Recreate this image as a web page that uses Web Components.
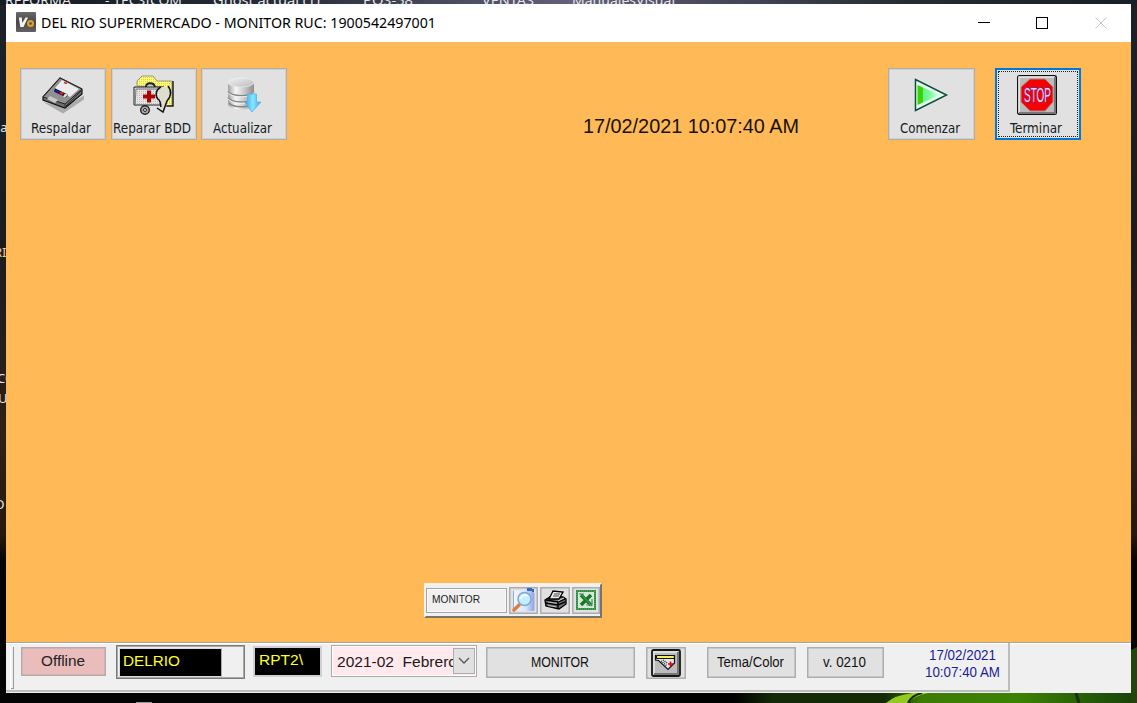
<!DOCTYPE html>
<html lang="es">
<head>
<meta charset="utf-8">
<title>DEL RIO SUPERMERCADO - MONITOR</title>
<style>
html,body{margin:0;width:1137px;height:703px;overflow:hidden;background:#111}
</style>
</head>
<body>
<desk-top>
<app-window></app-window>
</desk-top>
<script>
const define=(name,html,after)=>customElements.define(name,class extends HTMLElement{
  connectedCallback(){
    if(this.shadowRoot)return;
    const r=this.attachShadow({mode:'open'});
    const t=document.createElement('template');
    t.innerHTML=html;
    r.append(t.content.cloneNode(true));
    if(after)after(this,r);
  }
});

/* A single line of text condensed or widened to the width given in "w". */
define('fit-text',`<style>:host{display:inline-block;white-space:pre;line-height:1}span{display:inline-block;transform-origin:0 50%}</style><span><slot></slot></span>`,(el,r)=>{
  const w=+el.getAttribute('w'),s=r.querySelector('span');
  const cur=s.getBoundingClientRect().width;
  if(w&&cur){s.style.transform='scaleX('+(w/cur)+')';el.style.width=w+'px'}
});

const icons={
logo:`<svg width="20" height="20" viewBox="0 0 20 20"><defs><linearGradient id="a" x2="0" y2="1"><stop stop-color="#6a6a6a"/><stop offset=".5" stop-color="#484848"/><stop offset="1" stop-color="#626262"/></linearGradient></defs><rect width="20" height="20" rx="1" fill="url(#a)"/><path d="M2.800 5.500h3l.5 5.500L9.500 5.500h2.500L7.500 15H4.300z" fill="#f2f2f2"/><circle cx="14.500" cy="11.500" r="2.400" fill="none" stroke="#e0a02a" stroke-width="2.200"/></svg>`,
floppy:`<svg width="44" height="38" viewBox="0 0 44 38"><path d="M2 26L22 37.500l21-14v-4L24 31z" fill="#acacac"/><path d="M2 21L19 2l22 11v5L24 32 2 24z" fill="#6f6f6f" stroke="#111" stroke-width="1.200"/><path d="M2 21L19 2l22 11L24 28z" fill="#919191" stroke="#222"/><path d="M21 4l17 9-9 8-15-9z" fill="#ececec"/><path d="M14 12.500l13 6-2 3-12-6z" fill="#111"/><path d="M15 13.500l4 2-2 2-4-2z" fill="#1818b0"/><path d="M20 15.500l3 1.500-2 2-3-2z" fill="#d22"/><path d="M24 17.500l3 1-3 3-2-1z" fill="#ddd"/><path d="M9 20l8 4-3 3-8-4z" fill="#c9c9c9"/><path d="M23 6.500l3 1" stroke="#e22" stroke-width="1.500"/><path d="M24 28v4M41 14L25 30" stroke="#333"/></svg>`,
repair:`<svg width="42" height="40" viewBox="0 0 42 40"><defs><pattern id="p" width="2" height="2" patternUnits="userSpaceOnUse"><rect width="2" height="2" fill="#fcf978"/><rect width="1" height="1" fill="#dcd63c"/></pattern><pattern id="q" width="2" height="2" patternUnits="userSpaceOnUse"><rect width="2" height="2" fill="#e6e6e6"/><rect width="1" height="1" fill="#bbb"/></pattern></defs><path d="M4 11V6l5-5h11l4 5h15v25H30V12z" fill="url(#p)" stroke="#9a9a80"/><path d="M40 6v25H30" fill="none" stroke="#222" stroke-width="1.500"/><path d="M13 12c0-5 8-5 9 0" fill="#ccc" stroke="#222" stroke-width="1.800"/><path d="M1 12h30v18H1z" fill="url(#q)" stroke="#222"/><path d="M2 31l1-17h27" fill="none" stroke="#777"/><path d="M16 15.500v12M10 21.500h12" stroke="#b00000" stroke-width="4"/><path d="M28 12c-4 5-3 10 1 13l-1 8 5 2 1-10c4-4 4-9 0-13z" fill="#dedece"/><path d="M28 12c-6 3-6 10-2 13 2 2 1 4 2 7M35 11c4 5 3 11-1 15l-4 11-6-4" fill="none" stroke="#111" stroke-width="1.500"/><circle cx="12" cy="35" r="4.300" fill="#aaa" stroke="#222" stroke-width="1.400"/><circle cx="12" cy="35" r="1.500" fill="#eee" stroke="#222"/></svg>`,
database:`<svg width="36" height="36" viewBox="0 0 36 36"><defs><linearGradient id="a"><stop stop-color="#a2a2a2"/><stop offset=".3" stop-color="#f6f6f6"/><stop offset=".65" stop-color="#c5c5c5"/><stop offset="1" stop-color="#8e8e8e"/></linearGradient><linearGradient id="c" x2="1" y2="1"><stop stop-color="#f2f2f2"/><stop offset="1" stop-color="#bbb"/></linearGradient><linearGradient id="b"><stop stop-color="#3a9ae4"/><stop offset=".5" stop-color="#86e8ff"/><stop offset="1" stop-color="#38a5ee"/></linearGradient></defs><g fill="url(#a)"><path d="M2 21c4 6 23 6 26 0v7c-4 6-22 6-26 0z"/><path d="M2 15c4 5 23 5 26 0v5c-4 6-22 6-26 0z"/><path d="M2 5v9c4 6 23 6 26 0V5z"/></g><g fill="none"><path d="M2 14.500c4 5.500 23 5.500 26 0M2 20.500c4 6 23 6 26 0M3 26c4 5 21 5 25 0" stroke="#858585" stroke-width="1.400"/><path d="M2 15.800c4 5.500 23 5.500 26 0M2 21.800c4 6 23 6 26 0" stroke="#f2f2f2"/></g><ellipse cx="15" cy="5.500" rx="13" ry="4.500" fill="url(#c)" stroke="#eee" stroke-width=".7"/><path d="M21.500 17h9v8h4.500l-9 10-7.500-10h3z" fill="url(#b)" stroke="#5cb4ee" stroke-width=".8"/></svg>`,
play:`<svg width="36" height="34" viewBox="0 0 36 34"><defs><linearGradient id="a"><stop offset=".22" stop-color="#37d300"/><stop offset=".27" stop-color="#64f282"/><stop offset=".65" stop-color="#82ffa4"/><stop offset="1" stop-color="#fff"/></linearGradient></defs><path d="M1.500 1.500v31l31-15.500z" fill="#e9fff0" stroke="#07513a" stroke-width="1.500"/><path d="M3.500 7v20l22-10z" fill="url(#a)"/></svg>`,
stop:`<svg width="42" height="40" viewBox="0 0 42 40"><rect x=".7" y=".7" width="38.600" height="38.600" rx="1.500" fill="#bbb" stroke="#111" stroke-width="1.400"/><path d="M2 38V2h36" fill="none" stroke="#eee" stroke-width="1.500"/><path d="M38 2v36H2" fill="none" stroke="#777" stroke-width="2"/><path d="M13 4h15l8 8v15l-8 9H13l-9-9V12z" fill="#f80000" stroke="#a88"/><g font-family="Liberation Sans" font-size="21"><text x="7" y="27" textLength="27" lengthAdjust="spacingAndGlyphs" fill="#dcd4e4" stroke="#8d1f8a" stroke-width="1.800" paint-order="stroke">STOP</text></g></svg>`,
search:`<svg width="25" height="24" viewBox="0 0 25 24"><defs><linearGradient id="a"><stop stop-color="#f4f7ff"/><stop offset=".6" stop-color="#dae6fb"/><stop offset="1" stop-color="#8ca6ec"/></linearGradient></defs><path d="M2 3l14-2h7v22H3z" fill="url(#a)"/><path d="M2.500 3v19M23 5v17" stroke="#8fabdf"/><path d="M16 0h5v3h-5zM21 1h2v3h-2z" fill="#3866c4"/><path d="M8 17l-5 5" stroke="#d8813c" stroke-width="3.500" stroke-linecap="round"/><circle cx="13.500" cy="11" r="6.500" fill="#c2efff" stroke="#88a6cc" stroke-width="1.500"/><path d="M9.500 11c1-4 5-5 7-3" fill="none" stroke="#fff" stroke-width="1.500"/></svg>`,
printer:`<svg width="23" height="20" viewBox="0 0 23 20"><path d="M1 10l5-3h13l3 2v5l-7 5L2 16z" fill="#777" stroke="#000" stroke-width="1.400"/><path d="M5 9L9 1l10 1-4 7z" fill="#eee" stroke="#000" stroke-width="1.300"/><path d="M10 4h6M9 6h6" stroke="#444"/><path d="M2 10l12 2 7-3M2 13l12 2 7-3M14 12v6" fill="none" stroke="#000" stroke-width="1.400"/><path d="M4 12l9 1.300M4 15.500l8 1.300" stroke="#bbb"/><path d="M14 11l6-3" stroke="#ddd"/></svg>`,
excel:`<svg width="20" height="20" viewBox="0 0 20 20"><rect x="1" y="1" width="18" height="18" fill="#d6e8d6" stroke="#2c8a42" stroke-width="2"/><rect x="1" y="1" width="18" height="18" fill="none" stroke="#6fae7b" stroke-width="1" stroke-dasharray="1 1"/><path d="M5 5l10 10M15 5L5 15" stroke="#187529" stroke-width="3.500"/><path d="M3 4h5M5 4l11 12M16 9v6h-6" fill="none" stroke="#3f9150" stroke-width="1.200"/></svg>`,
drop:`<svg width="30" height="28" viewBox="0 0 30 28"><rect x="1" y="1" width="28" height="26" rx="1.500" fill="#bcbcbc" stroke="#161616" stroke-width="1.800"/><path d="M3 25V3h24" fill="none" stroke="#e6e6e6" stroke-width="1.500"/><path d="M27 3v22H3" fill="none" stroke="#777" stroke-width="2"/><path d="M5 10l12 11 7-8v-3z" fill="#e5e5e5"/><path d="M5.500 6.500h18v3h-18z" fill="#e8e23a" stroke="#111"/><path d="M7 8h15" stroke="#ffff90"/><path d="M4.500 6v5l3 .5 9.500 9 6.500-6.500V6" fill="none" stroke="#111" stroke-width="1.200"/><path d="M10 12l6 5M12 11l4 3" stroke="#333" stroke-width="1.500" stroke-dasharray="1 1"/><path d="M19.500 12.500v5M17 15h5" stroke="#e00000" stroke-width="1.500"/></svg>`};

define('ui-icon',`<style>:host{display:block;line-height:0}svg{display:block}</style>`,(el,r)=>{
  r.innerHTML+=icons[el.getAttribute('name')];
});

/* Large toolbar command: picture above, caption below. */
define('tool-button',`<style>
:host{display:flex;flex-direction:column;justify-content:space-between;align-items:center;box-sizing:border-box;width:86px;height:72px;border:1px solid #adadad;box-shadow:inset 0 0 0 1px #d2d0cc;background:#e1e1e1;flex:none;font:14px "DejaVu Sans Condensed","DejaVu Sans",sans-serif;font-stretch:condensed;color:#161b24}
.pic{display:flex;height:51px;padding-top:1px;align-items:center;justify-content:center}
.cap{height:19px;padding-right:4px}
:host([focused]){border:2px solid #0078d7;box-shadow:none;outline:1px dotted #222;outline-offset:-4px}
:host([focused]) .pic{height:49px;padding-top:0}:host([focused]) .cap{height:18px}
</style><div class="pic"><slot name="icon"></slot></div><div class="cap"><slot></slot></div>`);

define('push-button',`<style>:host{display:flex;box-sizing:border-box;align-items:center;justify-content:center;flex:none;border:1px solid #adadad;box-shadow:inset 0 0 0 .5px #adadad;background:#e1e1e1;color:#111;font:14px "Liberation Sans",sans-serif}</style><slot></slot>`);

define('title-bar',`<style>
:host{display:flex;align-items:center;height:38px;box-sizing:border-box;background:#fff;padding:0 24px 2px 10px;color:#000;font:15px "Noto Sans",sans-serif}
fit-text{margin-left:5px;flex:1;}
ui-icon{margin-top:0}
.ctl{display:flex;align-items:center;gap:46px;padding-top:2px;margin-right:1px}
svg{display:block}
</style><ui-icon name="logo"></ui-icon><fit-text w="395">DEL RIO SUPERMERCADO - MONITOR RUC: 1900542497001</fit-text>
<div class="ctl"><svg width="12" height="12"><path d="M0 5.500h12" stroke="#000"/></svg><svg width="12" height="12"><rect x=".5" y=".5" width="11" height="11" fill="none" stroke="#000"/></svg><svg width="12" height="12" style="margin-right:-1px;margin-left:1px"><path d="M.5 .5l11 11M11.500 .5l-11 11" stroke="#c4c4c4"/></svg></div>`);

define('report-bar',`<style>
:host{display:flex;align-items:center;box-sizing:border-box;width:178px;height:35px;background:#f0f0f0;border:2px solid;border-color:#f7f3ec #77746e #77746e #f7f3ec;gap:2px;font-size:0}
.name{display:flex;align-items:center;box-sizing:border-box;width:81px;height:25px;border:1px solid #a2a4aa;box-shadow:inset 0 0 0 1px #fafafa;padding:0 0 2px 5px;font:10.500px "Liberation Sans",sans-serif;color:#222}
push-button{width:29px;height:27px;padding-bottom:2px}
push-button.b{width:30px}
</style><div class="name"><fit-text w="48">MONITOR</fit-text></div><push-button><ui-icon name="search"></ui-icon></push-button><push-button class="b"><ui-icon name="printer"></ui-icon></push-button><push-button style="flex:1 1 0;min-width:0"><ui-icon name="excel"></ui-icon></push-button>`);

define('work-area',`<style>
:host{display:flex;flex-direction:column;justify-content:space-between;height:600px;box-sizing:border-box;padding:26px 50px 24px 14px;background:#ffb957}
.row{display:flex}
.clock{margin:46px 89px 0 296px;color:#161208;font:21px "Liberation Sans",sans-serif}
report-bar{margin-left:404px}
</style><div class="row">
<tool-button><ui-icon slot="icon" name="floppy"></ui-icon><fit-text w="60">Respaldar</fit-text></tool-button>
<tool-button style="margin-left:5px"><ui-icon slot="icon" name="repair"></ui-icon><fit-text w="78">Reparar BDD</fit-text></tool-button>
<tool-button style="margin-left:4px"><ui-icon slot="icon" name="database"></ui-icon><fit-text w="59">Actualizar</fit-text></tool-button>
<div class="clock"><fit-text w="216">17/02/2021 10:07:40 AM</fit-text></div>
<tool-button style="width:87px"><ui-icon slot="icon" name="play"></ui-icon><fit-text w="60">Comenzar</fit-text></tool-button>
<tool-button focused style="margin-left:20px"><ui-icon slot="icon" name="stop"></ui-icon><fit-text w="52">Terminar</fit-text></tool-button>
</div><report-bar></report-bar>`);

define('status-bar',`<style>
:host{display:flex;height:51px;box-sizing:border-box;border-top:1px solid #a5a39e;background:#f0f0f0;font:14px "Liberation Sans",sans-serif;box-shadow:inset 0 1px #fff}
.panel{display:flex;align-items:flex-start;box-sizing:border-box;width:1004px;height:49px;border-right:2px solid #bdbdbd;border-bottom:2px solid #bdbdbd;padding-left:5px;flex:none}
.grip{box-sizing:border-box;width:3px;height:42px;margin-top:4px;border-right:1px solid #9a9a9a;border-bottom:1px solid #9a9a9a;box-shadow:-1px 0 #fff}
push-button{padding-bottom:2px}
.off{background:#eabcbc;width:85px;height:29px;margin:4px 0 0 7px;color:#222;border-color:#b8a8a8}
.db{box-sizing:border-box;width:129px;height:34px;border:1px solid #777b7a;box-shadow:inset 0 0 0 1px #aaa;margin:2px 0 0 10px;padding:2px 0 0 2px}
.blk{display:flex;box-sizing:border-box;background:#000;color:#ffff1c;font-size:15.500px}
.db .blk{width:103px;height:29px;border:1px solid #d9dce0;border-right-color:#aaa;padding:4px 0 0 3px}
.rpt{width:69px;height:31px;border:2px solid #d0d0d6;margin:3px 0 0 8px;padding:4px 0 0 4px}
.combo{display:flex;box-sizing:border-box;width:146px;height:32px;border:1px solid #aaa;outline:1px solid #fff;outline-offset:-2px;background:#ffe9ec;margin:2px 0 0 9px;padding:2px 1px 2px 5px;color:#1c1820;font-size:15.500px}
.val{width:116px;overflow:hidden;padding-top:5px;box-sizing:border-box}
.arr{display:flex;align-items:center;justify-content:center;box-sizing:border-box;width:22px;height:26px;border:1px solid #adadad;background:#e1e1e1}
.mon{width:149px;height:31px;margin:4px 0 0 9px}
.ico{width:40px;height:32px;margin:4px 0 0 11px;padding:0}
.tema{width:89px;height:31px;margin:4px 0 0 21px}
.ver{width:77px;height:31px;margin:4px 0 0 11px}
.date{display:flex;flex-direction:column;align-items:center;gap:3px;color:#1c1c96;font-size:14px;margin:5px 0 0 41px;width:75px}
</style><div class="panel"><div class="grip"></div>
<push-button class="off"><fit-text w="44" style="font-size:15.500px;padding-right:2px">Offline</fit-text></push-button>
<div class="db"><div class="blk"><fit-text w="57">DELRIO</fit-text></div></div>
<div class="blk rpt"><fit-text w="44">RPT2\\</fit-text></div>
<div class="combo"><div class="val"><fit-text w="120">2021-02  Febrero</fit-text></div><div class="arr"><svg width="12" height="8"><path d="M1 1l5 5 5-5" fill="none" stroke="#555" stroke-width="1.300"/></svg></div></div>
<push-button class="mon"><fit-text w="58" style="padding-right:2px">MONITOR</fit-text></push-button>
<push-button class="ico"><ui-icon name="drop"></ui-icon></push-button>
<push-button class="tema"><fit-text w="67" style="padding-right:2px">Tema/Color</fit-text></push-button>
<push-button class="ver"><fit-text w="43" style="padding-right:2px">v. 0210</fit-text></push-button>
<div class="date"><fit-text w="67">17/02/2021</fit-text><fit-text w="75">10:07:40 AM</fit-text></div>
</div>`);

define('app-window',`<style>:host{display:block;width:1125px;height:689px;position:relative;background:#fff}</style><title-bar></title-bar><work-area></work-area><status-bar></status-bar>`);

/* Wallpaper with shortcut captions peeking out around the window. */
define('desk-top',`<style>
:host{display:block;box-sizing:border-box;position:relative;width:1137px;height:703px;padding:4px 6px 10px;overflow:hidden;background:#111}
svg{position:absolute;left:0;top:0}
.n{position:absolute;font:13px/14px "Noto Sans",sans-serif;color:#e4e6ea}
.t{top:-7px}
</style>
<svg width="1137" height="703"><defs>
<linearGradient id="t"><stop stop-color="#151b22"/><stop offset=".25" stop-color="#282c38"/><stop offset=".5" stop-color="#62607a"/><stop offset=".65" stop-color="#454558"/><stop offset=".8" stop-color="#252c32"/><stop offset="1" stop-color="#172026"/></linearGradient>
<linearGradient id="s" x2="0" y2="1"><stop stop-color="#1b2227"/><stop offset=".35" stop-color="#1c1c1d"/><stop offset=".62" stop-color="#2e2117"/><stop offset=".76" stop-color="#28180c"/><stop offset=".8" stop-color="#030303"/></linearGradient>
<linearGradient id="g"><stop stop-color="#000"/><stop offset=".25" stop-color="#000"/><stop offset=".32" stop-color="#132908"/><stop offset=".53" stop-color="#142b05"/><stop offset=".6" stop-color="#3d7c04"/><stop offset=".78" stop-color="#3d8203"/><stop offset="1" stop-color="#18410b"/></linearGradient></defs>
<rect width="1137" height="703" fill="url(#s)"/><rect width="1137" height="5" fill="url(#t)"/><rect y="693" width="700" height="10" fill="#030303"/><rect x="600" y="693" width="537" height="10" fill="url(#g)"/>
<path d="M886 703q9-8 27-10h15q-14 3-20 10z" fill="#94c920"/><path d="M908 703q4-8 14-10" stroke="#122b03" stroke-width="2" fill="none"/><path d="M1076 693l3 10" stroke="#163405" stroke-width="3"/><path d="M1131 650l6-3v56h-6z" fill="#23450c"/><rect x="136" y="702" width="16" height="1" fill="#999"/></svg>
<fit-text class="n t" style="left:5px" w="66">REFORMA</fit-text><fit-text class="n t" style="left:105px" w="77">- TECSICOM</fit-text><fit-text class="n t" style="left:213px" w="107">Ghost actual (1)</fit-text><fit-text class="n t" style="left:363px" w="50">POS-58</fit-text><fit-text class="n t" style="left:482px" w="52">VENTAS</fit-text><fit-text class="n t" style="left:572px" w="103">ManualesVisual</fit-text>
<span class="n" style="left:-3px;top:120px">la</span><span class="n" style="left:-6px;top:245px;color:#f0c9a0">RI</span><span class="n" style="left:-3px;top:371px">CO</span><span class="n" style="left:-2px;top:391px">U</span><span class="n" style="left:-5px;top:497px">D</span>
<slot></slot>`);
</script>
</body>
</html>
